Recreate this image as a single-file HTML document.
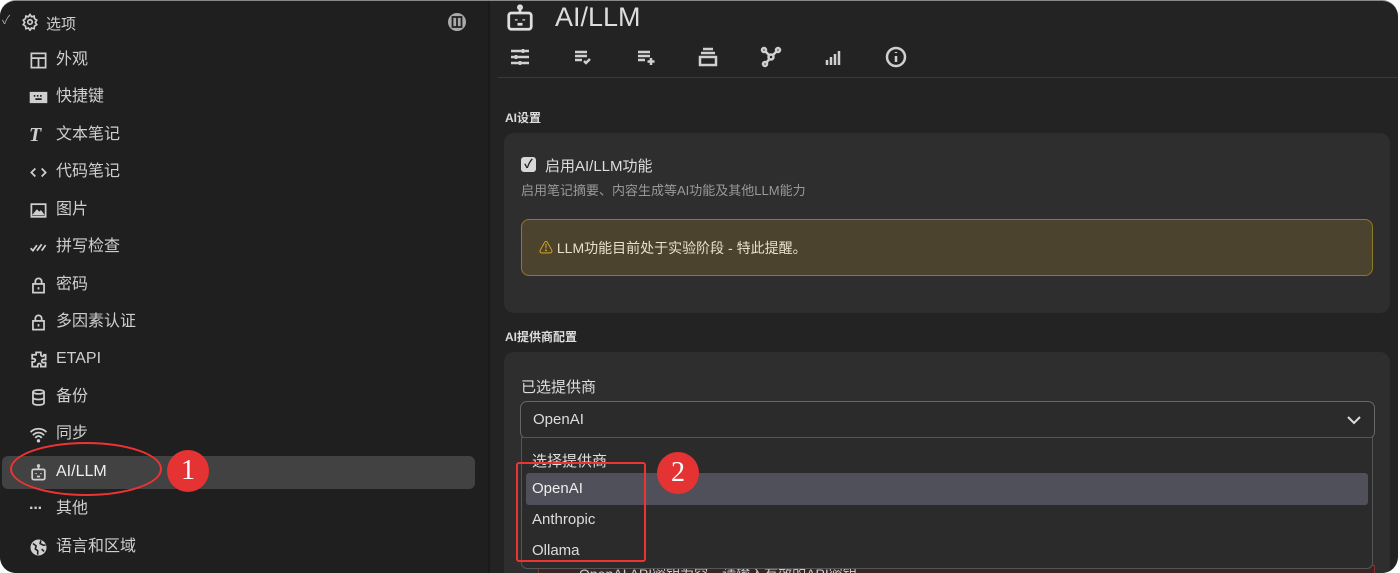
<!DOCTYPE html>
<html><head><meta charset="utf-8"><style>
*{box-sizing:border-box;margin:0;padding:0}
body{width:1400px;height:573px;background:#fff;overflow:hidden;font-family:"Liberation Sans","Noto Sans CJK SC",sans-serif;position:relative}
.win{position:absolute;left:0;top:0;width:1398px;height:573px;background:#232323;border-radius:16px;overflow:hidden;border-top:1px solid #888}
.side{position:absolute;left:0;top:0;width:488px;height:573px;background:#1f1f1f}
.it{position:absolute;left:29px;height:34px;line-height:34px;color:#cfcfcf;font-size:16px;display:flex;align-items:center}
.it svg{width:19px;height:19px;margin-right:8px;fill:none;stroke:#cfcfcf;stroke-width:2.2}
.t{position:absolute;color:#ddd;white-space:nowrap}
.card{position:absolute;left:504px;width:886px;background:#2e2e2e;border-radius:10px}
.tb svg{position:absolute;width:24px;height:24px;fill:none;stroke:#d0d0d0;stroke-width:2.5}
</style></head><body>
<div class="win">
<div class="side">
 <div class="t" style="left:2px;top:10px;color:#aaa;font-size:12px">✓</div>
 <svg style="position:absolute;left:21px;top:12px" width="18" height="18" viewBox="0 0 24 24" fill="none" stroke="#cfcfcf" stroke-width="2.2"><circle cx="12" cy="12" r="3"/><path d="M12 2l2 3 3.5-1 .5 3.5 3 2-2 3 2 3-3 2-.5 3.5-3.5-1-2 3-2-3-3.5 1-.5-3.5-3-2 2-3-2-3 3-2 .5-3.5 3.5 1z"/></svg>
 <div class="t" style="left:46px;top:12px;font-size:15px;color:#cfcfcf">选项</div>
 <svg style="position:absolute;left:447px;top:11px" width="20" height="20" viewBox="0 0 20 20"><circle cx="10" cy="10" r="9" fill="#aaa"/><rect x="5.5" y="5" width="9" height="10" fill="none" stroke="#222" stroke-width="1.8"/><line x1="10" y1="5" x2="10" y2="15" stroke="#222" stroke-width="1.8"/></svg>
 <div style="position:absolute;left:2px;top:455px;width:473px;height:33px;background:#424242;border-radius:6px"></div>
 <div class="it" style="top:42px"><svg viewBox="0 0 24 24"><rect x="3" y="3" width="18" height="18"/><path d="M3 9h18M12 9v12"/></svg>外观</div>
 <div class="it" style="top:79px"><svg viewBox="0 0 24 24"><rect x="2" y="6" width="20" height="12" fill="#cfcfcf"/><path d="M6 10h2M10 10h2M14 10h2M8 14h8" stroke="#1f1f1f"/></svg>快捷键</div>
 <div class="it" style="top:117px"><span style="width:19px;margin-right:8px;font-family:'Liberation Serif';font-style:italic;font-weight:bold;font-size:20px">T</span>文本笔记</div>
 <div class="it" style="top:154px"><svg viewBox="0 0 24 24"><path d="M8 7l-5 5 5 5M16 7l5 5-5 5"/></svg>代码笔记</div>
 <div class="it" style="top:192px"><svg viewBox="0 0 24 24"><rect x="3" y="4" width="18" height="16"/><path d="M6 17l4-5 3 3 2-2 3 4z" fill="#cfcfcf"/></svg>图片</div>
 <div class="it" style="top:229px"><svg viewBox="0 0 24 24"><path d="M2 13l3 3 5-7M10 16l6-8M16 16l5-7"/></svg>拼写检查</div>
 <div class="it" style="top:267px"><svg viewBox="0 0 24 24"><rect x="5" y="10" width="14" height="11"/><path d="M8 10V7a4 4 0 018 0v3M12 14v3"/></svg>密码</div>
 <div class="it" style="top:304px"><svg viewBox="0 0 24 24"><rect x="5" y="10" width="14" height="11"/><path d="M8 10V7a4 4 0 018 0v3M12 14v3"/></svg>多因素认证</div>
 <div class="it" style="top:341px"><svg viewBox="0 0 24 24"><path d="M9 3h6v3a2 2 0 004 0h2v6h-3a2 2 0 000 4h3v5h-6v-2a2 2 0 00-4 0v2H4v-6h2a2 2 0 000-4H4V6h5z"/></svg>ETAPI</div>
 <div class="it" style="top:379px"><svg viewBox="0 0 24 24"><ellipse cx="12" cy="5" rx="7" ry="2.5"/><path d="M5 5v14c0 1.4 3 2.5 7 2.5s7-1.1 7-2.5V5M5 12c0 1.4 3 2.5 7 2.5s7-1.1 7-2.5"/></svg>备份</div>
 <div class="it" style="top:416px"><svg viewBox="0 0 24 24"><path d="M2 9a14 14 0 0120 0M5 13a9 9 0 0114 0M8 16.5a4.5 4.5 0 018 0"/><circle cx="12" cy="20" r="1" fill="#cfcfcf"/></svg>同步</div>
 <div class="it" style="top:454px;color:#eee"><svg viewBox="0 0 24 24"><rect x="4" y="8" width="16" height="13" rx="2"/><path d="M12 8V4"/><circle cx="12" cy="3.5" r="1"/><path d="M9 13v1M15 13v1M10 17h4"/></svg>AI/LLM</div>
 <div class="it" style="top:491px"><span style="width:19px;margin-right:8px;font-weight:bold;letter-spacing:-1px">···</span>其他</div>
 <div class="it" style="top:529px"><svg viewBox="0 0 24 24"><circle cx="12" cy="12" r="9" fill="#cfcfcf"/><path d="M5 7l4 3-1 4 3 2v5M15 3l-1 4 4 2 3 0M16 14l3 3" stroke="#1f1f1f" stroke-width="2"/></svg>语言和区域</div>
 <div style="position:absolute;left:10px;top:441px;width:152px;height:54px;border:2.5px solid #e33;border-radius:50%"></div>
 <div style="position:absolute;left:167px;top:449px;width:42px;height:42px;border-radius:50%;background:#e53333;color:#fff;font-family:'Liberation Serif';font-size:28px;text-align:center;line-height:42px">1</div>
</div>
<div style="position:absolute;left:488px;top:0;width:2px;height:573px;background:#1a1a1a"></div>
<svg style="position:absolute;left:505px;top:2px" width="30" height="30" viewBox="0 0 24 24" fill="none" stroke="#ddd" stroke-width="2.2"><rect x="3" y="8" width="18" height="13" rx="2"/><path d="M12 8V5"/><circle cx="12" cy="3.5" r="1.3"/><path d="M9 13v1M15 13v1M10 17h4"/></svg>
<div class="t" style="left:555px;top:1px;font-size:27px">AI/LLM</div>
<div class="tb">
 <svg style="left:508px;top:44px" viewBox="0 0 24 24"><path d="M3 6h18M3 12h18M3 18h18M15 4v4M8 10v4M12 16v4"/></svg>
 <svg style="left:571px;top:44px" viewBox="0 0 24 24"><path d="M4 7h12M4 11h12M4 15h7M13 16l2 2 4-4"/></svg>
 <svg style="left:634px;top:44px" viewBox="0 0 24 24"><path d="M4 7h12M4 11h12M4 15h7M17 13v7M13.5 16.5h7"/></svg>
 <svg style="left:696px;top:44px" viewBox="0 0 24 24"><path d="M7 4h10M5 8h14"/><rect x="4" y="12" width="16" height="8"/></svg>
 <svg style="left:759px;top:44px" viewBox="0 0 24 24"><circle cx="5" cy="5" r="2"/><circle cx="19" cy="5" r="2"/><circle cx="12" cy="12" r="2.5"/><circle cx="6" cy="19" r="2"/><path d="M6.5 6.5l4 4M17.5 6.5l-4 4M10.5 14l-3 3.5"/></svg>
 <svg style="left:821px;top:44px" viewBox="0 0 24 24"><path d="M6 20v-5M10 20v-8M14 20v-11M18 20v-14"/></svg>
 <svg style="left:884px;top:44px" viewBox="0 0 24 24"><circle cx="12" cy="12" r="9"/><path d="M12 11v6M12 7v1"/></svg>
</div>
<div style="position:absolute;left:498px;top:76px;width:900px;height:1px;background:#3a3a3a"></div>
<div class="t" style="left:505px;top:108px;font-size:12px;font-weight:bold">AI设置</div>
<div class="card" style="top:132px;height:180px">
 <div style="position:absolute;left:17px;top:24px;width:15px;height:15px;background:#d8d8d8;border-radius:3px;color:#222;font-size:12px;line-height:15px;text-align:center;font-weight:bold">✓</div>
 <div class="t" style="left:41px;top:22px;font-size:15px">启用AI/LLM功能</div>
 <div class="t" style="left:17px;top:47px;font-size:13px;color:#999">启用笔记摘要、内容生成等AI功能及其他LLM能力</div>
 <div style="position:absolute;left:17px;top:86px;width:852px;height:57px;background:#4b432e;border:1.5px solid #8f7a25;border-radius:8px">
  <div class="t" style="left:17px;top:18px;font-size:14px;color:#e8e0c8"><span style="color:#e8b020">⚠</span> LLM功能目前处于实验阶段 - 特此提醒。</div>
 </div>
</div>
<div class="t" style="left:505px;top:327px;font-size:12px;font-weight:bold">AI提供商配置</div>
<div class="card" style="top:351px;height:240px">
 <div class="t" style="left:17px;top:24px;font-size:15px">已选提供商</div>
 <div style="position:absolute;left:16px;top:49px;width:855px;height:38px;border:1.5px solid #666;border-radius:7px;background:#2b2b2b">
  <div class="t" style="left:12px;top:9px;font-size:15px">OpenAI</div>
  <svg style="position:absolute;right:12px;top:11px" width="16" height="14" viewBox="0 0 16 14"><path d="M2 4l6 6 6-6" fill="none" stroke="#ddd" stroke-width="2"/></svg>
 </div>
 <div style="position:absolute;left:34px;top:213px;width:837px;height:30px;border:1.5px solid #8a2f2f;background:#3a2424"><div class="t" style="left:40px;top:-2px;font-size:14px;color:#ccc">OpenAI API密钥为空，请输入有效的API密钥</div></div>
 <div style="position:absolute;left:17px;top:85px;width:852px;height:132px;border:1px solid #555;border-radius:0 0 6px 6px;background:#2b2b2b">
  <div class="t" style="left:10px;top:12px;font-size:15px">选择提供商</div>
  <div style="position:absolute;left:4px;top:35px;width:842px;height:32px;background:#4f505a;border-radius:3px"></div>
  <div class="t" style="left:10px;top:42px;font-size:15px;color:#eee">OpenAI</div>
  <div class="t" style="left:10px;top:73px;font-size:15px">Anthropic</div>
  <div class="t" style="left:10px;top:104px;font-size:15px">Ollama</div>
 </div>
</div>
<div style="position:absolute;left:516px;top:461px;width:130px;height:100px;border:2.5px solid #e33;border-radius:3px"></div>
<div style="position:absolute;left:657px;top:451px;width:42px;height:42px;border-radius:50%;background:#e53333;color:#fff;font-family:'Liberation Serif';font-size:28px;text-align:center;line-height:42px">2</div>
</div>
</body></html>
